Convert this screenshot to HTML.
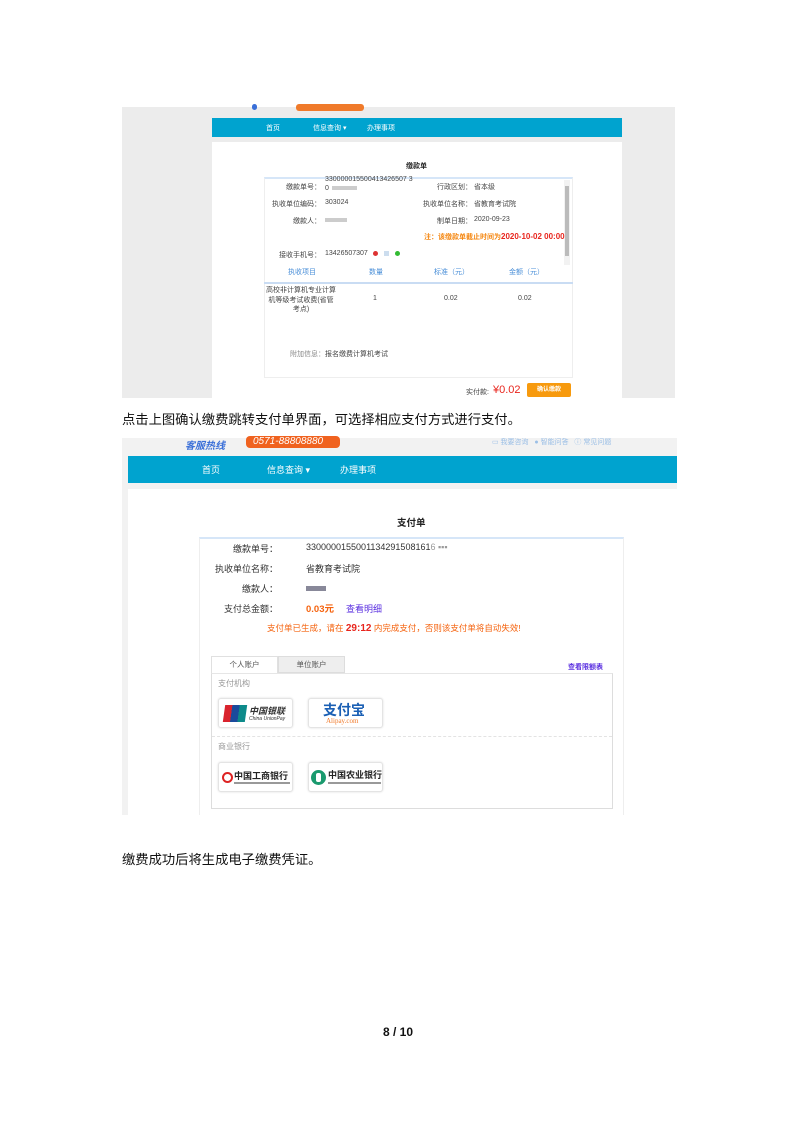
<!DOCTYPE html>
<html><head><meta charset="utf-8"><style>
*{margin:0;padding:0;box-sizing:border-box}
body{width:793px;height:1122px;background:#fff;position:relative;font-family:"Liberation Sans","Noto Sans CJK SC",sans-serif;overflow:hidden}
.a{position:absolute;white-space:nowrap}
.s{font-size:7px;color:#444}
.g{color:#888}
.r{text-align:right}
.b{color:#4a8fd8}
.logo{position:absolute;border:1px solid #e4e4e4;border-radius:3px;background:#fff;box-shadow:0 0 2px #ddd}
</style></head><body>
<!-- Screenshot 1 -->
<div class="a" style="left:122px;top:107px;width:553px;height:291px;background:#ececec"></div>
<div class="a" style="left:296px;top:104px;width:68px;height:7px;background:#f07a2a;border-radius:3px"></div>
<div class="a" style="left:252px;top:104px;width:5px;height:6px;background:#3a6fd8;border-radius:3px"></div>
<div class="a" style="left:212px;top:118px;width:410px;height:19px;background:#00a3cf"></div>
<div class="a s" style="left:266px;top:123px;color:#fff">首页</div>
<div class="a s" style="left:313px;top:123px;color:#fff">信息查询 ▾</div>
<div class="a s" style="left:367px;top:123px;color:#fff">办理事项</div>
<div class="a" style="left:212px;top:142px;width:410px;height:256px;background:#fff"></div>
<div class="a" style="left:406px;top:161px;font-size:7px;font-weight:bold;color:#222">缴款单</div>
<div class="a" style="left:264px;top:177px;width:309px;height:201px;border:1px solid #eee;border-top:2px solid #d6e6f8"></div>
<div class="a" style="left:564px;top:180px;width:6px;height:85px;background:#f2f2f2"></div>
<div class="a" style="left:565px;top:186px;width:4px;height:70px;background:#bbb"></div>
<div class="a s r" style="left:250px;top:182px;width:71px">缴款单号：</div>
<div class="a s" style="left:325px;top:176px">330000015500413426507 3</div>
<div class="a s" style="left:325px;top:185px">0<span style="display:inline-block;width:25px;height:4px;background:#ccc;margin-left:3px"></span></div>
<div class="a s r" style="left:250px;top:199px;width:71px">执收单位编码：</div>
<div class="a s" style="left:325px;top:199px">303024</div>
<div class="a s r" style="left:250px;top:216px;width:71px">缴款人：</div>
<div class="a" style="left:325px;top:218px;width:22px;height:4px;background:#ccc"></div>
<div class="a s r" style="left:400px;top:182px;width:72px">行政区划：</div>
<div class="a s" style="left:474px;top:182px">省本级</div>
<div class="a s r" style="left:400px;top:199px;width:72px">执收单位名称：</div>
<div class="a s" style="left:474px;top:199px">省教育考试院</div>
<div class="a s r" style="left:400px;top:216px;width:72px">制单日期：</div>
<div class="a s" style="left:474px;top:216px">2020-09-23</div>
<div class="a" style="left:424px;top:232px;font-size:7px;color:#f5860f;font-weight:bold">注：该缴款单截止时间为<span style="color:#e8251d;font-size:8px">2020-10-02 00:00</span></div>
<div class="a s r" style="left:250px;top:250px;width:71px">接收手机号：</div>
<div class="a s" style="left:325px;top:250px">13426507307</div>
<div class="a" style="left:373px;top:251px;width:5px;height:5px;border-radius:50%;background:#d33"></div>
<div class="a" style="left:384px;top:251px;width:5px;height:5px;background:#cde"></div>
<div class="a" style="left:395px;top:251px;width:5px;height:5px;border-radius:50%;background:#3b3"></div>
<div class="a s b" style="left:288px;top:267px">执收项目</div>
<div class="a s b" style="left:369px;top:267px">数量</div>
<div class="a s b" style="left:434px;top:267px">标准（元）</div>
<div class="a s b" style="left:509px;top:267px">金额（元）</div>
<div class="a" style="left:264px;top:282px;width:309px;height:2px;background:#c9dcf3"></div>
<div class="a s" style="left:266px;top:286px;line-height:9.5px;text-align:center;width:70px;white-space:normal">高校非计算机专业计算机等级考试收费(省管考点)</div>
<div class="a s" style="left:373px;top:295px">1</div>
<div class="a s" style="left:444px;top:295px">0.02</div>
<div class="a s" style="left:518px;top:295px">0.02</div>
<div class="a s" style="left:290px;top:349px"><span class="g">附加信息：</span>报名缴费计算机考试</div>
<div class="a s" style="left:466px;top:387px">实付款:</div>
<div class="a" style="left:493px;top:384px;font-size:11px;color:#e8251d">¥0.02</div>
<div class="a" style="left:527px;top:383px;width:44px;height:14px;background:#f79a0e;border-radius:2px;color:#fff;font-size:6px;text-align:center;line-height:14px;font-weight:bold">确认缴款</div>

<div class="a" style="left:122px;top:409px;font-size:13.3px;color:#111">点击上图确认缴费跳转支付单界面，可选择相应支付方式进行支付。</div>

<!-- Screenshot 2 -->
<div class="a" style="left:122px;top:438px;width:555px;height:377px;background:#f2f2f2"></div>
<div class="a" style="left:185px;top:437px;font-size:10px;color:#3a6fd8;font-weight:bold;font-style:italic">客服热线</div>
<div class="a" style="left:246px;top:436px;width:94px;height:12px;background:#f0621f;border-radius:4px;color:#fff;font-size:10px;font-style:italic;line-height:11px;padding-left:7px">0571-88808880</div>
<div class="a" style="left:492px;top:437px;font-size:7px;color:#9bbfe6">▭ 我要咨询 &nbsp; ● 智能问答 &nbsp; ⓘ 常见问题</div>
<div class="a" style="left:128px;top:456px;width:549px;height:27px;background:#00a3cf"></div>
<div class="a" style="left:202px;top:463px;font-size:9px;color:#fff">首页</div>
<div class="a" style="left:267px;top:463px;font-size:9px;color:#fff">信息查询 ▾</div>
<div class="a" style="left:340px;top:463px;font-size:9px;color:#fff">办理事项</div>
<div class="a" style="left:128px;top:489px;width:549px;height:326px;background:#fff"></div>
<div class="a" style="left:397px;top:515px;font-size:9.5px;font-weight:bold;color:#222">支付单</div>
<div class="a" style="left:199px;top:537px;width:425px;height:278px;border:1px solid #eee;border-top:2px solid #d6e6f8;border-bottom:none"></div>
<div class="a r" style="left:200px;top:542px;width:78px;font-size:9px;color:#333">缴款单号：</div>
<div class="a" style="left:306px;top:542px;font-size:9px;color:#333">3300000155001134291508161<span style="color:#999">6 ▪▪▪</span></div>
<div class="a r" style="left:200px;top:562px;width:78px;font-size:9px;color:#333">执收单位名称：</div>
<div class="a" style="left:306px;top:562px;font-size:9px;color:#333">省教育考试院</div>
<div class="a r" style="left:200px;top:582px;width:78px;font-size:9px;color:#333">缴款人：</div>
<div class="a" style="left:306px;top:586px;width:20px;height:5px;background:#889"></div>
<div class="a r" style="left:200px;top:602px;width:78px;font-size:9px;color:#333">支付总金额：</div>
<div class="a" style="left:306px;top:601px;font-size:9.5px;color:#f5630f;font-weight:bold">0.03元</div>
<div class="a" style="left:346px;top:602px;font-size:9px;color:#5a2fe0">查看明细</div>
<div class="a" style="left:267px;top:622px;font-size:8.5px;color:#f5630f">支付单已生成，请在 <b style="color:#e8251d;font-size:10px">29:12</b> 内完成支付，否则该支付单将自动失效!</div>
<div class="a" style="left:211px;top:656px;width:67px;height:18px;border:1px solid #e0e0e0;border-bottom:none;background:#fff;font-size:7.5px;color:#555;text-align:center;line-height:16px">个人账户</div>
<div class="a" style="left:278px;top:656px;width:67px;height:17px;border:1px solid #ddd;background:#eee;font-size:7.5px;color:#555;text-align:center;line-height:16px">单位账户</div>
<div class="a" style="left:568px;top:662px;font-size:7px;color:#5a2fe0;font-weight:bold">查看限额表</div>
<div class="a" style="left:211px;top:673px;width:402px;height:136px;border:1px solid #ddd;border-top:1px solid #e6e6e6"></div>
<div class="a" style="left:218px;top:678px;font-size:8px;color:#999">支付机构</div>
<div class="logo" style="left:218px;top:698px;width:75px;height:30px">
 <div class="a" style="left:5px;top:6px;width:22px;height:17px;background:linear-gradient(90deg,#d9232d 33%,#1a4a9c 33% 66%,#0d8a8a 66%);transform:skewX(-8deg)"></div>
 <div class="a" style="left:30px;top:5px;font-size:9px;font-weight:bold;color:#333;font-style:italic">中国银联</div>
 <div class="a" style="left:30px;top:17px;font-size:5px;color:#333;font-style:italic">China UnionPay</div>
</div>
<div class="logo" style="left:308px;top:698px;width:75px;height:30px">
 <div class="a" style="left:14px;top:1px;font-size:14px;font-weight:bold;color:#1a5fb4">支付宝</div>
 <div class="a" style="left:17px;top:18px;font-size:7px;color:#f07a2a;font-family:'Liberation Serif',serif">Alipay.com</div>
</div>
<div class="a" style="left:212px;top:736px;width:400px;border-top:1px dashed #e3e3e3"></div>
<div class="a" style="left:218px;top:741px;font-size:8px;color:#999">商业银行</div>
<div class="logo" style="left:218px;top:762px;width:75px;height:30px">
 <div class="a" style="left:3px;top:9px;width:11px;height:11px;border:2px solid #d22;border-radius:50%"></div>
 <div class="a" style="left:15px;top:6px;font-size:9px;font-weight:bold;color:#222">中国工商银行</div>
 <div class="a" style="left:15px;top:19px;width:56px;height:2px;background:#999"></div>
</div>
<div class="logo" style="left:308px;top:762px;width:75px;height:30px">
 <div class="a" style="left:2px;top:7px;width:15px;height:15px;border-radius:50%;background:#1a9a6e"></div>
 <div class="a" style="left:7px;top:10px;width:5px;height:9px;background:#fff;border-radius:2px"></div>
 <div class="a" style="left:19px;top:5px;font-size:9px;font-weight:bold;color:#222">中国农业银行</div>
 <div class="a" style="left:19px;top:19px;width:53px;height:2px;background:#999"></div>
</div>

<div class="a" style="left:122px;top:849px;font-size:13.3px;color:#111">缴费成功后将生成电子缴费凭证。</div>
<div class="a" style="left:383px;top:1025px;font-size:12px;font-weight:bold;color:#111">8 / 10</div>
</body></html>
